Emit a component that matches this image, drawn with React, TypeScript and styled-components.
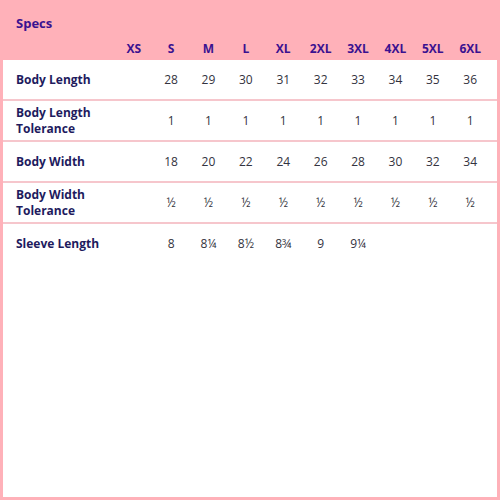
import React from "react";
import styled, { createGlobalStyle } from "styled-components";

const Global = createGlobalStyle`
  html, body { margin: 0; padding: 0; }
  body { font-family: "Open Sans", "Noto Sans", sans-serif; }
`;

const Page = styled.div`
  width: 500px;
  height: 500px;
  background: #ffb1b9;
  display: flex;
  flex-direction: column;
  box-sizing: border-box;
  padding: 0 3px 3px 3px;
`;

const Title = styled.h2`
  margin: 0;
  padding: 14px 0 0 13px;
  height: 38px;
  box-sizing: border-box;
  font-size: 13px;
  font-weight: 700;
  color: #3a1190;
  line-height: 18px;
`;

const cols = `112px repeat(10, 37.4px)`;

const HeaderRow = styled.div`
  display: grid;
  grid-template-columns: ${cols};
  height: 22px;
  align-items: center;
`;

const HeadCell = styled.div`
  text-align: center;
  font-size: 12px;
  font-weight: 700;
  color: #3a1190;
  line-height: 16px;
`;

const Body = styled.div`
  flex: 1;
  background: #ffffff;
  display: flex;
  flex-direction: column;
`;

const Row = styled.div<{ $last?: boolean }>`
  display: grid;
  grid-template-columns: ${cols};
  height: 39px;
  align-items: center;
  border-bottom: ${(p) => (p.$last ? "none" : "2px solid #f6c6cc")};
  flex-shrink: 0;
`;

const Label = styled.div`
  padding-left: 13px;
  font-size: 12px;
  font-weight: 700;
  color: #1e1b5e;
  line-height: 16px;
`;

const Value = styled.div`
  text-align: center;
  font-size: 12px;
  color: #333340;
  line-height: 16px;
`;

const sizes = ["XS", "S", "M", "L", "XL", "2XL", "3XL", "4XL", "5XL", "6XL"];

const rows: { label: React.ReactNode; values: string[] }[] = [
  { label: "Body Length", values: ["", "28", "29", "30", "31", "32", "33", "34", "35", "36"] },
  { label: <>Body Length<br />Tolerance</>, values: ["", "1", "1", "1", "1", "1", "1", "1", "1", "1"] },
  { label: "Body Width", values: ["", "18", "20", "22", "24", "26", "28", "30", "32", "34"] },
  { label: <>Body Width<br />Tolerance</>, values: ["", "½", "½", "½", "½", "½", "½", "½", "½", "½"] },
  { label: "Sleeve Length", values: ["", "8", "8¼", "8½", "8¾", "9", "9¼", "", "", ""] },
];

export default function App() {
  return (
    <>
      <Global />
      <Page>
        <Title>Specs</Title>
        <HeaderRow>
          <div />
          {sizes.map((s) => (
            <HeadCell key={s}>{s}</HeadCell>
          ))}
        </HeaderRow>
        <Body>
          {rows.map((r, i) => (
            <Row key={i} $last={i === rows.length - 1}>
              <Label>{r.label}</Label>
              {r.values.map((v, j) => (
                <Value key={j}>{v}</Value>
              ))}
            </Row>
          ))}
        </Body>
      </Page>
    </>
  );
}
